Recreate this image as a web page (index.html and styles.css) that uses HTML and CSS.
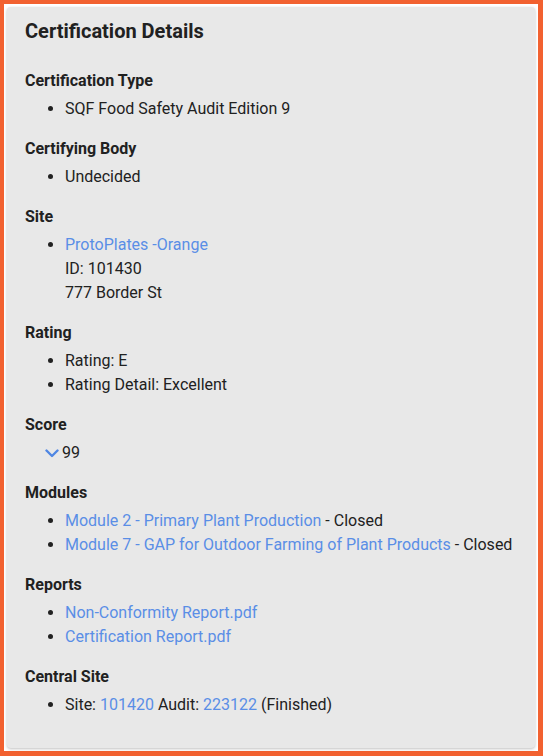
FILE: index.html
```html
<!DOCTYPE html>
<html>
<head>
<meta charset="utf-8">
<link rel="stylesheet" href="styles.css">
</head>
<body>
<div class="frame">
  <div class="card">
    <h2 class="title">Certification Details</h2>

    <section class="section">
      <h3 class="label">Certification Type</h3>
      <ul class="list">
        <li>SQF Food Safety Audit Edition 9</li>
      </ul>
    </section>

    <section class="section">
      <h3 class="label">Certifying Body</h3>
      <ul class="list">
        <li>Undecided</li>
      </ul>
    </section>

    <section class="section">
      <h3 class="label">Site</h3>
      <ul class="list">
        <li><a class="link" href="#">ProtoPlates -Orange</a><br>ID: 101430<br>777 Border St</li>
      </ul>
    </section>

    <section class="section">
      <h3 class="label">Rating</h3>
      <ul class="list">
        <li>Rating: E</li>
        <li>Rating Detail: Excellent</li>
      </ul>
    </section>

    <section class="section">
      <h3 class="label">Score</h3>
      <div class="score">
        <svg class="chevron" width="14" height="9" viewBox="0 0 14 9"><path d="M1.5 1.5 L7 7 L12.5 1.5" fill="none" stroke="#4f86e3" stroke-width="2.4" stroke-linecap="round" stroke-linejoin="round"/></svg>
        <span>99</span>
      </div>
    </section>

    <section class="section">
      <h3 class="label">Modules</h3>
      <ul class="list">
        <li><a class="link" href="#">Module 2 - Primary Plant Production</a> - Closed</li>
        <li><a class="link" href="#">Module 7 - GAP for Outdoor Farming of Plant Products</a> - Closed</li>
      </ul>
    </section>

    <section class="section">
      <h3 class="label">Reports</h3>
      <ul class="list">
        <li><a class="link" href="#">Non-Conformity Report.pdf</a></li>
        <li><a class="link" href="#">Certification Report.pdf</a></li>
      </ul>
    </section>

    <section class="section">
      <h3 class="label">Central Site</h3>
      <ul class="list">
        <li>Site: <a class="link" href="#">101420</a> Audit: <a class="link" href="#">223122</a> (Finished)</li>
      </ul>
    </section>
  </div>
</div>
</body>
</html>
```

FILE: styles.css
```css
html, body {
  margin: 0;
  padding: 0;
}
body {
  width: 543px;
  height: 756px;
  background: #f26130;
  font-family: Roboto, "Liberation Sans", sans-serif;
  color: #212121;
}
.frame {
  box-sizing: border-box;
  width: 543px;
  height: 756px;
  border-style: solid;
  border-color: #f26130;
  border-width: 4px 5px 5px 4px;
  background: #ffffff;
  padding: 3px 3px 3px 3px;
}
.card {
  box-sizing: border-box;
  height: 100%;
  background: #e8e8e8;
  border-radius: 4px;
  box-shadow: 0 1px 3px rgba(0,0,0,0.25);
  padding: 10px 18px 0 18px;
}
.title {
  margin: 0 0 24px 0;
  font-size: 20px;
  line-height: 28px;
  font-weight: 700;
}
.section {
  margin-bottom: 16px;
}
.label {
  margin: 0 0 4px 0;
  font-size: 16px;
  line-height: 24px;
  font-weight: 700;
}
.list {
  margin: 0;
  padding-left: 40px;
  font-size: 16px;
  line-height: 24px;
}
.link {
  color: #5a8ee6;
  text-decoration: none;
}
.score {
  display: flex;
  align-items: center;
  gap: 3px;
  padding-left: 20px;
  font-size: 16px;
  line-height: 24px;
}
.chevron {
  display: block;
}
```
